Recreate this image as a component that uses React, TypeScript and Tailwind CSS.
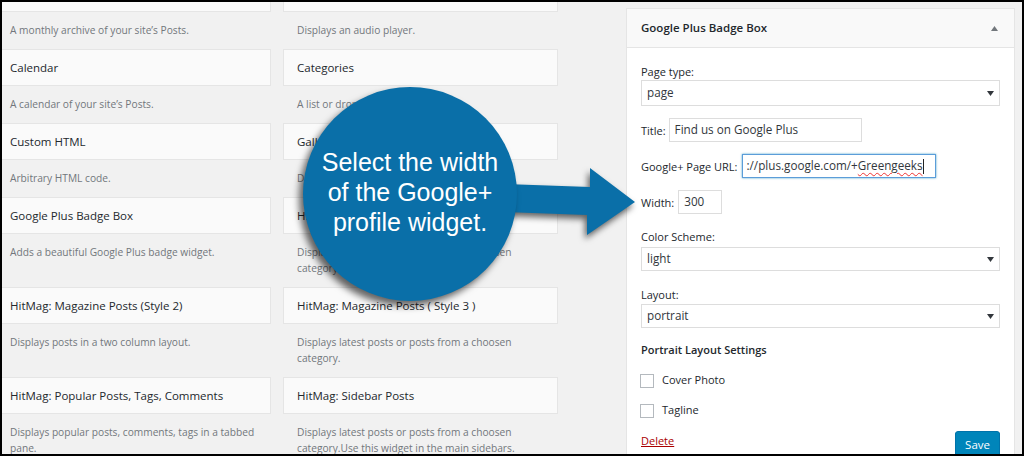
import React from "react";

type Widget = { title: string; desc: string[] };

const colA: Widget[] = [
  { title: "Archives", desc: ["A monthly archive of your site’s Posts."] },
  { title: "Calendar", desc: ["A calendar of your site’s Posts."] },
  { title: "Custom HTML", desc: ["Arbitrary HTML code."] },
  { title: "Google Plus Badge Box", desc: ["Adds a beautiful Google Plus badge widget."] },
  { title: "HitMag: Magazine Posts (Style 2)", desc: ["Displays posts in a two column layout."] },
  {
    title: "HitMag: Popular Posts, Tags, Comments",
    desc: ["Displays popular posts, comments, tags in a tabbed", "pane."],
  },
];

const colB: Widget[] = [
  { title: "Audio", desc: ["Displays an audio player."] },
  { title: "Categories", desc: ["A list or dropdown of categories."] },
  { title: "Gallery", desc: ["Displays an image gallery."] },
  {
    title: "HitMag: Grid Posts",
    desc: ["Displays latest posts or posts from a choosen", "category."],
  },
  {
    title: "HitMag: Magazine Posts ( Style 3 )",
    desc: ["Displays latest posts or posts from a choosen", "category."],
  },
  {
    title: "HitMag: Sidebar Posts",
    desc: ["Displays latest posts or posts from a choosen", "category.Use this widget in the main sidebars."],
  },
];

function WidgetCell({ w }: { w: Widget }) {
  return (
    <div className="flex flex-col">
      <div className="h-[37px] border border-[#e5e5e5] bg-[#fafafa] px-[13px] flex items-center text-[11.5px] text-[#23282d]">
        {w.title}
      </div>
      <div className="px-[14px] pt-[10px] pb-[11px] text-[10.2px] leading-[16px] text-[#72777c]">
        {w.desc.map((line) => (
          <div key={line} className="whitespace-nowrap">
            {line}
          </div>
        ))}
      </div>
    </div>
  );
}

function DownArrow() {
  return (
    <svg width="7" height="5" viewBox="0 0 7 5">
      <polygon points="0,0 7,0 3.5,5" fill="#32373c" />
    </svg>
  );
}

function Select({ value, className }: { value: string; className: string }) {
  return (
    <div
      className={
        "border border-[#ddd] bg-white flex items-center justify-between pl-[5px] pr-[5px] text-[11.7px] text-[#32373c] " +
        className
      }
    >
      <span>{value}</span>
      <DownArrow />
    </div>
  );
}

function Checkbox({ label, className }: { label: string; className: string }) {
  return (
    <div className={"flex items-center h-[17px] " + className}>
      <span className="-ml-[1px] w-[14px] h-[14px] border border-[#b4b9be] bg-white" />
      <span className="ml-[8px]">{label}</span>
    </div>
  );
}

function Panel() {
  return (
    <div className="ml-[68px] mt-[6px] w-[389px] h-[470px] shrink-0 border border-[#e5e5e5] bg-white">
      <div className="h-[39px] bg-[#f9f9f9] border-b border-[#e5e5e5] flex items-center justify-between px-[14px]">
        <span className="text-[11.5px] font-semibold text-[#23282d]">Google Plus Badge Box</span>
        <svg width="7" height="5" viewBox="0 0 7 5" className="mr-[2px]">
          <polygon points="0,5 3.5,0 7,5" fill="#72777c" />
        </svg>
      </div>
      <div className="px-[14px] pt-[15px] text-[11px] text-[#23282d]">
        <div className="leading-[17px]">Page type:</div>
        <Select value="page" className="h-[26px]" />

        <div className="mt-[12px] flex items-center">
          <span className="mt-[2px]">Title:</span>
          <div className="ml-[3px] w-[193px] h-[24px] border border-[#ddd] px-[5px] flex items-center text-[11.7px] text-[#32373c]">
            Find us on Google Plus
          </div>
        </div>

        <div className="mt-[12px] flex items-center">
          <span className="mt-[2px]">Google+ Page URL:</span>
          <div className="ml-[5px] w-[194px] h-[24px] border border-[#5b9dd9] shadow-[0_0_2px_rgba(30,140,190,0.8)] px-[3px] flex items-center text-[11.7px] text-[#32373c] whitespace-nowrap overflow-hidden">
            ://plus.google.com/+
            <span className="underline decoration-wavy decoration-[#e33] decoration-1 underline-offset-2">Greengeeks</span>
            <span className="w-px h-[15px] bg-[#222]" />
          </div>
        </div>

        <div className="mt-[12px] flex items-center">
          <span className="mt-[2px]">Width:</span>
          <div className="ml-[4px] w-[44px] h-[24px] border border-[#ddd] px-[5px] flex items-center text-[11.7px] text-[#32373c]">
            300
          </div>
        </div>

        <div className="mt-[14px] leading-[17px]">Color Scheme:</div>
        <Select value="light" className="mt-[2px] h-[24px]" />

        <div className="mt-[15px] leading-[17px]">Layout:</div>
        <Select value="portrait" className="mt-[1px] h-[24px]" />

        <div className="mt-[13px] leading-[17px] font-semibold">Portrait Layout Settings</div>

        <Checkbox label="Cover Photo" className="mt-[14px]" />
        <Checkbox label="Tagline" className="mt-[13px]" />

        <div className="mt-[12px] flex items-start justify-between">
          <span className="mt-[1px] leading-[17px] text-[#a00] underline">Delete</span>
          <span className="h-[28px] px-[9px] flex items-center rounded-[3px] bg-[#0085ba] border border-[#0073aa] text-white text-[11.5px] shadow-[0_1px_0_#006799]">
            Save
          </span>
        </div>
      </div>
    </div>
  );
}

function Callout() {
  return (
    <>
      <svg
        className="absolute left-[498px] top-[158px] drop-shadow-[-2px_4px_3px_rgba(0,0,0,0.6)]"
        width="150"
        height="90"
        viewBox="0 0 150 90"
      >
        <polygon points="5,24 90,27 90,8 135,42 87,75 87,55 5,52" fill="#0a6fa8" />
      </svg>
      <div className="absolute left-[301px] top-[85px] w-[214px] h-[214px] rounded-full bg-[#0a6fa8] shadow-[-4px_5px_7px_rgba(0,0,0,0.6)] flex flex-col items-center justify-center pb-[4px] font-['Liberation_Sans',Arial,sans-serif] text-white text-[25px] leading-[30px]">
        <span>Select the width</span>
        <span>of the Google+</span>
        <span>profile widget.</span>
      </div>
    </>
  );
}

export default function App() {
  return (
    <div className="relative w-[1024px] h-[456px] overflow-hidden border-2 border-black bg-[#f1f1f1] font-['Open_Sans',sans-serif]">
      <div className="flex items-start">
        <div className="grid grid-cols-[275px_275px] gap-x-[12px] -ml-[6px] -mt-[27px] shrink-0">
          {colA.map((a, i) => (
            <React.Fragment key={a.title}>
              <WidgetCell w={a} />
              <WidgetCell w={colB[i]} />
            </React.Fragment>
          ))}
        </div>
        <Panel />
      </div>
      <Callout />
    </div>
  );
}
